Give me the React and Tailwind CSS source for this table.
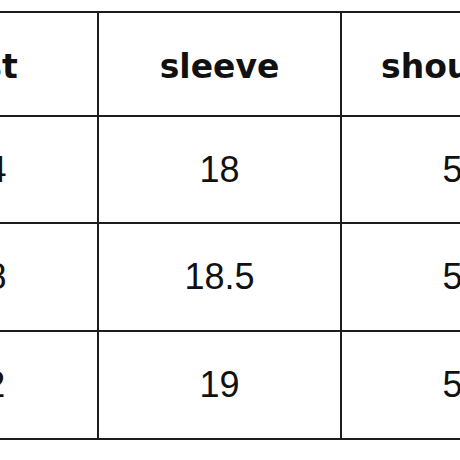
const headers = ["bust", "sleeve", "shoulder"];

const rows = [
    ["104", "18", "52"],
    ["108", "18.5", "54"],
    ["112", "19", "56"],
];

export default function App() {
    return (
        <div className="w-[460px] h-[460px] overflow-hidden bg-white">
            <div className="mt-[11px] ml-[-146px] inline-grid grid-cols-[241px_241px_241px] grid-rows-[102px_105px_106px_106px] gap-[2px] p-[2px] bg-[#1c1c1c]">
                {headers.map(header => (
                    <div
                        key={header}
                        className="bg-white flex items-center justify-center pt-[6px] text-[33px] font-bold text-[#111] font-['DejaVu_Sans',sans-serif]"
                    >
                        {header}
                    </div>
                ))}
                {rows.map(row =>
                    row.map((value, i) => (
                        <div
                            key={`${row[0]}-${i}`}
                            className="bg-white flex items-center justify-center text-[36px] text-[#111] font-['Liberation_Sans',Arial,sans-serif]"
                        >
                            {value}
                        </div>
                    ))
                )}
            </div>
        </div>
    );
}
